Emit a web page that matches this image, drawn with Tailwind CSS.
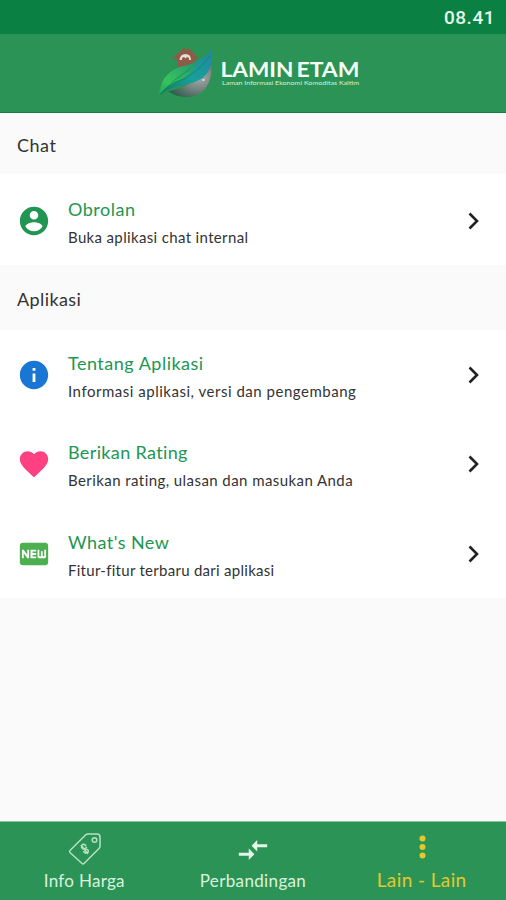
<!DOCTYPE html>
<html lang="id">
<head>
<meta charset="utf-8">
<title>Lamin Etam</title>
<script src="https://cdn.jsdelivr.net/npm/@tailwindcss/browser@4"></script>
</head>
<body class="bg-[#fafafa]">
<div class="w-[506px] h-[900px] flex flex-col overflow-hidden bg-[#fafafa] font-['Lato',sans-serif] text-[#333]">
  <div class="h-[34px] shrink-0 bg-[#0b8043] flex items-center justify-end pr-[11px] pt-[3px] font-['Roboto',sans-serif] font-medium text-[19px] tracking-[0.5px] text-[#e6f7e9]">08.41</div>
  <header class="h-[79px] shrink-0 bg-[#2c9356] border-b border-[#16803f] flex pl-[154px]">
    <svg class="w-[206px] h-[78px]" viewBox="154 34 206 78">
      <defs>
        <linearGradient id="leaf" x1="0" y1="1" x2="1" y2="0"><stop offset="0" stop-color="#1fa45b"/><stop offset=".3" stop-color="#36c45a"/><stop offset=".65" stop-color="#2cae67"/><stop offset="1" stop-color="#238e78"/></linearGradient>
        <linearGradient id="teal" x1="0" y1="1" x2="1" y2="0"><stop offset="0" stop-color="#13765c"/><stop offset=".5" stop-color="#18a199"/><stop offset="1" stop-color="#2386a5"/></linearGradient>
        <radialGradient id="ball" cx=".72" cy=".4" r=".75"><stop offset="0" stop-color="#a4a9ac"/><stop offset=".5" stop-color="#75837f"/><stop offset="1" stop-color="#315f50"/></radialGradient>
      </defs>
      <path d="M172 58L184 48L187 50L189 48L198 58L195 60L194 68H177V60Z" fill="#8c5c49"/>
      <path d="M179.500 60Q180 54 185.500 54Q191 54 191 60Z" fill="#e8dcd0"/>
      <path d="M182 60V58L184 57L185.500 58.500L187 57L189 58V60Z" fill="#8c5c49"/>
      <path d="M168 91C183 90 202 77 211 65C213 79 206 94 192 96.500C182 98 173 95 168 91Z" fill="url(#ball)"/>
      <path d="M159 96C168 82 177 71 191 64Q207 58 211.500 49C213 65 209 75 199 80C186 87 172 84 159 96Z" fill="url(#teal)"/>
      <path d="M159 96C160 82 165 75 175 69C182 65 188 67 198 60C195 70 188 77 179 80C170 84 165 87 159 96Z" fill="url(#leaf)"/>
      <path d="M160 94Q173 80 191 68M174 83Q194 77 210 56" fill="none" stroke="#168458" stroke-width=".8"/>
      <circle cx="203.500" cy="80" r="1.100" fill="#e5eeee"/>
      <g font-family="Lato, sans-serif" fill="#f5fff5">
        <text x="220.500" y="76.500" font-size="21" font-weight="700" textLength="73" lengthAdjust="spacingAndGlyphs">LAMIN</text>
        <text x="296.500" y="76.500" font-size="21" font-weight="700" textLength="63" lengthAdjust="spacingAndGlyphs">ETAM</text>
        <text x="222" y="84.500" font-size="6" font-weight="400" fill="#d4f2da" textLength="137" lengthAdjust="spacingAndGlyphs">Laman Informasi Ekonomi Komoditas Kaltim</text>
      </g>
    </svg>
  </header>

  <main class="flex-1">
    <h2 class="h-[61px] flex items-center pl-[17px] pt-[4px] text-[18px] tracking-[0.5px]">Chat</h2>
    <section class="bg-white pt-[2px]">
      <div class="h-[89px] flex items-center pl-[17px] pr-[16px]">
        <svg class="w-[34px] h-[34px] shrink-0" viewBox="0 0 24 24" fill="#219653"><path d="M12 2C6.480 2 2 6.480 2 12s4.480 10 10 10 10-4.480 10-10S17.520 2 12 2zm0 3c1.660 0 3 1.340 3 3s-1.340 3-3 3-3-1.340-3-3 1.340-3 3-3zm0 14.200c-2.500 0-4.710-1.280-6-3.220.030-1.990 4-3.080 6-3.080 1.990 0 5.970 1.090 6 3.080-1.290 1.940-3.500 3.220-6 3.220z"/></svg>
        <div class="ml-[17px] pt-[4px] flex-1"><h3 class="text-[18px] leading-[24px] tracking-[0.5px] text-[#219653]">Obrolan</h3><p class="mt-[5px] text-[15px] leading-[22px] tracking-[0.35px]">Buka aplikasi chat internal</p></div>
        <svg class="w-[34px] h-[34px] shrink-0" viewBox="0 0 34 34"><path d="M13.500 9.500L21 17L13.500 24.500" fill="none" stroke="#222" stroke-width="2.600"/></svg>
      </div>
    </section>
    <h2 class="h-[65px] flex items-center pl-[17px] pt-[4px] text-[18px] tracking-[0.4px]">Aplikasi</h2>
    <section class="bg-white">
      <div class="h-[89.5px] flex items-center pl-[17px] pr-[16px]">
        <svg class="w-[34px] h-[34px] shrink-0" viewBox="0 0 24 24" fill="#1976d2"><path d="M12 2C6.480 2 2 6.480 2 12s4.480 10 10 10 10-4.480 10-10S17.520 2 12 2zm1 15h-2v-6h2v6zm0-8h-2V7h2v2z"/></svg>
        <div class="ml-[17px] pt-[3px] flex-1"><h3 class="text-[18px] leading-[24px] tracking-[0.5px] text-[#219653]">Tentang Aplikasi</h3><p class="mt-[5px] text-[15px] leading-[22px] tracking-[0.52px]">Informasi aplikasi, versi dan pengembang</p></div>
        <svg class="w-[34px] h-[34px] shrink-0" viewBox="0 0 34 34"><path d="M13.500 9.500L21 17L13.500 24.500" fill="none" stroke="#222" stroke-width="2.600"/></svg>
      </div>
      <div class="h-[89.5px] flex items-center pl-[17px] pr-[16px]">
        <svg class="w-[34px] h-[34px] shrink-0" viewBox="0 0 24 24" fill="#ff4081"><path d="M12 21.350l-1.450-1.320C5.400 15.360 2 12.280 2 8.500 2 5.420 4.420 3 7.500 3c1.740 0 3.410.810 4.500 2.090C13.090 3.810 14.760 3 16.500 3 19.580 3 22 5.420 22 8.500c0 3.780-3.400 6.860-8.550 11.540L12 21.350z"/></svg>
        <div class="ml-[17px] pt-[3px] flex-1"><h3 class="text-[18px] leading-[24px] tracking-[0.36px] text-[#219653]">Berikan Rating</h3><p class="mt-[5px] text-[15px] leading-[22px] tracking-[0.43px]">Berikan rating, ulasan dan masukan Anda</p></div>
        <svg class="w-[34px] h-[34px] shrink-0" viewBox="0 0 34 34"><path d="M13.500 9.500L21 17L13.500 24.500" fill="none" stroke="#222" stroke-width="2.600"/></svg>
      </div>
      <div class="h-[89px] flex items-center pl-[17px] pr-[16px]">
        <svg class="w-[34px] h-[34px] shrink-0" viewBox="0 0 24 24" fill="#4caf50"><path d="M20 4H4c-1.110 0-1.990.890-1.990 2L2 18c0 1.110.890 2 2 2h16c1.110 0 2-.890 2-2V6c0-1.110-.890-2-2-2zM8.500 15H7.300l-2.550-3.500V15H3.500V9h1.250l2.500 3.500V9H8.500v6zm5-4.740H11v1.120h2.500v1.260H11v1.110h2.500V15h-4V9h4v1.260zM20.500 14c0 .550-.450 1-1 1h-4c-.550 0-1-.450-1-1V9h1.250v4.510h1.130V9.990h1.250v3.510h1.120V9h1.250v5z"/></svg>
        <div class="ml-[17px] pt-[3px] flex-1"><h3 class="text-[18px] leading-[24px] tracking-[0.45px] text-[#219653]">What's New</h3><p class="mt-[5px] text-[15px] leading-[22px] tracking-[0.28px]">Fitur-fitur terbaru dari aplikasi</p></div>
        <svg class="w-[34px] h-[34px] shrink-0" viewBox="0 0 34 34"><path d="M13.500 9.500L21 17L13.500 24.500" fill="none" stroke="#222" stroke-width="2.600"/></svg>
      </div>
    </section>
  </main>

  <nav class="h-[79px] shrink-0 bg-[#2c9356] border-t border-[#8cc5a2] grid grid-cols-3 text-[#d9f3df]">
    <div class="flex flex-col items-center pt-[10px]">
      <svg class="w-[34px] h-[34px]" viewBox="0 0 34 34" fill="none" stroke="#b5e2c0" stroke-width="1.500" stroke-linejoin="round"><path d="M3 18.500L18.500 3Q19.500 2 21 2H30Q33 2 33 5V14Q33 15.500 32 16.500L17 31.500Q16 32.500 15 31.500L3 20.500Q2 19.500 3 18.500Z"/><circle cx="27.500" cy="8" r="2.300"/><path d="M19 14Q17 11 15 13Q13.500 15 16 17Q19 16 21 18Q22 21 19 21Q17 21 16.500 19M14 13L21 22M17 17L20 15"/></svg>
      <span class="mt-[4px] text-[17px] leading-[22px] tracking-[0.3px]">Info Harga</span>
    </div>
    <div class="flex flex-col items-center pt-[11px]">
      <svg class="w-[34px] h-[34px]" viewBox="0 0 24 24" fill="#e4f7e7"><path d="M9.010 14H2v2h7.010v3L13 15l-3.990-4v3zm5.980-1v-3H22V8h-7.010V5L11 9l3.990 4z"/></svg>
      <span class="mt-[3px] text-[17px] leading-[22px] tracking-[0.35px]">Perbandingan</span>
    </div>
    <div class="flex flex-col items-center pt-[8px] text-[#e3c92b]">
      <svg class="w-[34px] h-[34px]" viewBox="0 0 34 34" fill="currentColor"><circle cx="17.500" cy="8.500" r="3"/><circle cx="17.500" cy="17" r="3"/><circle cx="17.500" cy="25.500" r="3"/></svg>
      <span class="mt-[4px] text-[19px] leading-[24px] tracking-[0.4px]">Lain - Lain</span>
    </div>
  </nav>
</div>
</body>
</html>
